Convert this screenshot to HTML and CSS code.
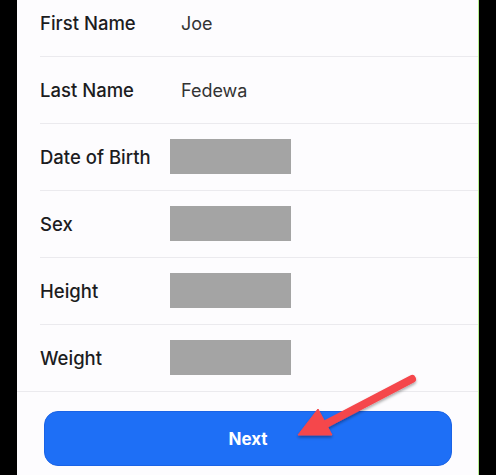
FILE: index.html
```html
<!DOCTYPE html>
<html>
<head>
<meta charset="utf-8">
<link rel="stylesheet" href="styles.css">
</head>
<body>
<div class="frame">
  <div class="list">
    <div class="row first"><span class="label">First Name</span><span class="value">Joe</span></div>
    <div class="row"><span class="label">Last Name</span><span class="value">Fedewa</span></div>
    <div class="row"><span class="label">Date of Birth</span><span class="redact"></span></div>
    <div class="row"><span class="label">Sex</span><span class="redact"></span></div>
    <div class="row"><span class="label">Height</span><span class="redact"></span></div>
    <div class="row last"><span class="label">Weight</span><span class="redact"></span></div>
  </div>
  <div class="actions">
    <button class="next">Next</button>
  </div>
  <svg class="arrow" width="140" height="90" viewBox="0 0 140 90">
    <defs>
      <filter id="sh" x="-20%" y="-20%" width="140%" height="150%">
        <feDropShadow dx="0" dy="2" stdDeviation="1.5" flood-color="#000" flood-opacity="0.35"/>
      </filter>
    </defs>
    <g filter="url(#sh)" fill="#f5464c" stroke="#f5464c">
      <line x1="128" y1="14" x2="40" y2="60" stroke-width="8" stroke-linecap="round"/>
      <polygon points="14,70 34,44 48,70" stroke-width="1" stroke-linejoin="round"/>
    </g>
  </svg>
</div>
</body>
</html>
```

FILE: styles.css
```css
html, body {
  margin: 0;
  padding: 0;
  background: #000;
  height: 100%;
  overflow: hidden;
}
.frame {
  position: relative;
  margin-left: 17px;
  width: 461px;
  height: 475px;
  background: #fdfcfe;
  border-right: 1px solid #b6ee8c;
  font-family: Inter, "Liberation Sans", sans-serif;
  overflow: hidden;
}
.list {
  margin-top: -10px;
  border-bottom: 1px solid #ebeaee;
}
.row {
  display: flex;
  align-items: center;
  height: 66px;
  margin-left: 23px;
  border-bottom: 1px solid #ebeaee;
}
.row.last {
  border-bottom: none;
}
.label {
  width: 130px;
  font-size: 18.5px;
  font-weight: 500;
  color: #1c1c1e;
}
.value {
  padding-left: 11px;
  font-size: 18px;
  color: #333;
}
.redact {
  width: 121px;
  height: 35px;
  margin-top: -2px;
  background: #a4a4a4;
}
.actions {
  padding: 19px 26px 0 27px;
}
.next {
  display: block;
  width: 100%;
  height: 55px;
  border: 1px solid #1a63e6;
  border-radius: 14px;
  background: #1e6ff6;
  color: #fff;
  font-family: Inter, "Liberation Sans", sans-serif;
  font-size: 17px;
  font-weight: 700;
}
.arrow {
  position: absolute;
  left: 267px;
  top: 365px;
}
```
